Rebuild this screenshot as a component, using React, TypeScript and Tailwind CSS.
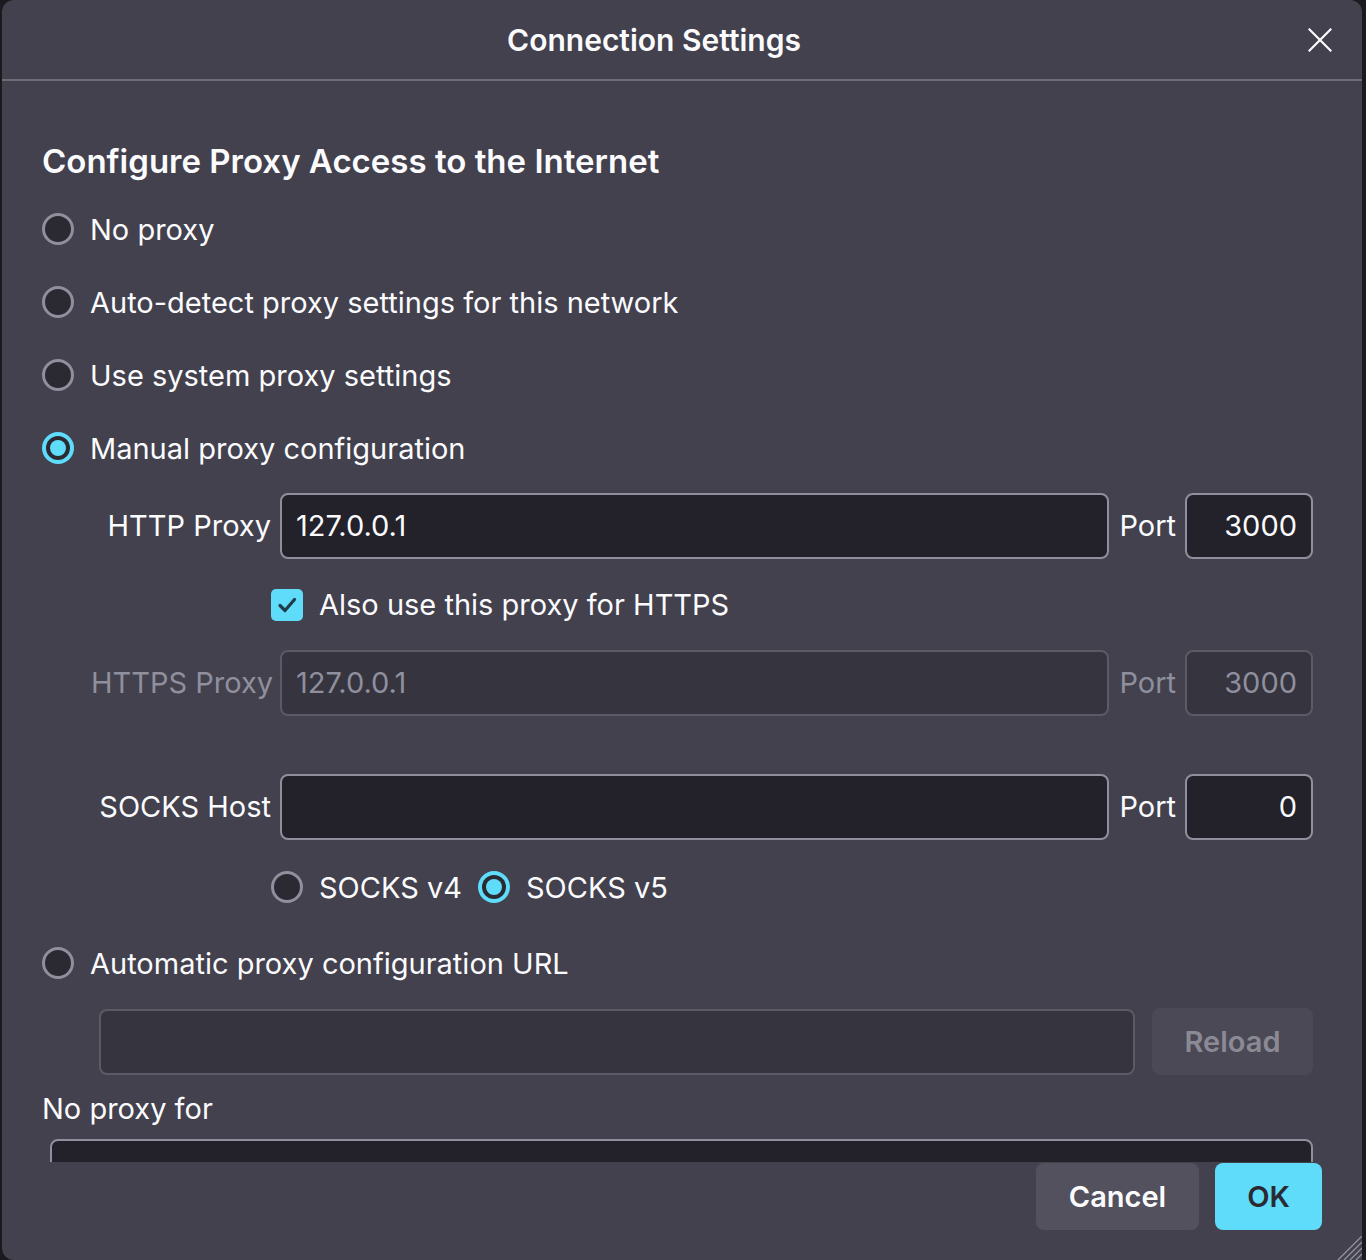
import React from "react";

const font = { fontFamily: "Inter, 'Noto Sans', sans-serif" };

function Radio({ checked }: { checked?: boolean }) {
  if (checked) {
    return (
      <div className="w-[32px] h-[32px] rounded-full bg-[#5fdcfa] flex items-center justify-center shrink-0">
        <div className="w-[24px] h-[24px] rounded-full bg-[#2b2a33] flex items-center justify-center">
          <div className="w-[16px] h-[16px] rounded-full bg-[#5fdcfa]" />
        </div>
      </div>
    );
  }
  return <div className="w-[32px] h-[32px] rounded-full border-[3px] border-[#8f8f9d] bg-[#2b2a33] shrink-0" />;
}

function RadioRow({ label, checked, className }: { label: string; checked?: boolean; className?: string }) {
  return (
    <div className={"flex items-center h-[32px] gap-[16px] " + (className ?? "")}>
      <Radio checked={checked} />
      <span className="text-[29px] text-[#fbfbfe] leading-none whitespace-nowrap">{label}</span>
    </div>
  );
}

function Field({ value, disabled, right, className }: { value?: string; disabled?: boolean; right?: boolean; className?: string }) {
  return (
    <div
      className={
        "h-[66px] rounded-[8px] border-2 flex items-center px-[14px] text-[29px] " +
        (disabled
          ? "bg-[#35343f] border-[#5b5a65] text-[#8f8f9d]"
          : "bg-[#23222b] border-[#8f8f9d] text-[#fbfbfe]") +
        (right ? " justify-end" : "") +
        (className ? " " + className : "")
      }
    >
      {value}
    </div>
  );
}

export default function App() {
  return (
    <div className="w-[1366px] h-[1260px] bg-[#1a1a1f] flex overflow-hidden" style={font}>
      <div className="ml-[2px] w-[1360px] h-full bg-[#42414d] rounded-t-[12px] rounded-bl-[12px] flex flex-col relative">
        {/* header */}
        <div className="h-[81px] border-b-2 border-[#6c6b76] flex items-center shrink-0">
          <div className="flex-1 text-center text-[30px] font-semibold text-[#fbfbfe] pt-[2px]">Connection Settings</div>
          <div className="w-[56px] flex justify-end pr-[30px]">
            <svg width="24" height="24" viewBox="0 0 24 24" fill="none" stroke="#fbfbfe" strokeWidth="2.2" strokeLinecap="square">
              <path d="M1.5 1.5 L22.5 22.5 M22.5 1.5 L1.5 22.5" />
            </svg>
          </div>
        </div>

        {/* content */}
        <div className="h-[1081px] overflow-hidden pl-[40px] pr-[49px] shrink-0">
          <div className="mt-[61px] h-[40px] flex items-center text-[33px] font-semibold text-[#fbfbfe] whitespace-nowrap">
            Configure Proxy Access to the Internet
          </div>
          <div className="mt-[31px] flex flex-col gap-[41px]">
            <RadioRow label="No proxy" />
            <RadioRow label="Auto-detect proxy settings for this network" />
            <RadioRow label="Use system proxy settings" />
            <RadioRow label="Manual proxy configuration" checked />
          </div>

          {/* manual grid */}
          <div className="mt-[29px] ml-[49px] grid grid-cols-[180px_1fr_auto_128px] items-center text-[29px]">
            <div className="text-right text-[#fbfbfe] whitespace-nowrap">HTTP Proxy</div>
            <Field value="127.0.0.1" className="ml-[9px]" />
            <div className="text-[#fbfbfe] pl-[10px] pr-[9px]">Port</div>
            <Field value="3000" right />

            <div className="col-span-4 h-[91px] pl-[180px] flex items-center gap-[16px]">
              <div className="w-[32px] h-[32px] rounded-[5px] bg-[#5fdcfa] flex items-center justify-center shrink-0">
                <svg width="22" height="22" viewBox="0 0 22 22" fill="none" stroke="#1f3d49" strokeWidth="3.2" strokeLinecap="round" strokeLinejoin="round">
                  <path d="M4 11.5 L9 16.5 L18.5 5.5" />
                </svg>
              </div>
              <span className="text-[#fbfbfe] whitespace-nowrap">Also use this proxy for HTTPS</span>
            </div>

            <div className="text-right text-[#8f8f9d] whitespace-nowrap">HTTPS Proxy</div>
            <Field value="127.0.0.1" disabled className="ml-[9px]" />
            <div className="text-[#8f8f9d] pl-[10px] pr-[9px]">Port</div>
            <Field value="3000" disabled right />

            <div className="h-[58px] col-span-4" />

            <div className="text-right text-[#fbfbfe] whitespace-nowrap">SOCKS Host</div>
            <Field className="ml-[9px]" />
            <div className="text-[#fbfbfe] pl-[10px] pr-[9px]">Port</div>
            <Field value="0" right />
          </div>

          <div className="mt-[31px] ml-[229px] flex items-center gap-[16px]">
            <RadioRow label="SOCKS v4" />
            <RadioRow label="SOCKS v5" checked />
          </div>

          <RadioRow className="mt-[44px]" label="Automatic proxy configuration URL" />

          <div className="mt-[29px] ml-[57px] flex items-center gap-[17px]">
            <div className="flex-1">
              <Field disabled />
            </div>
            <div className="w-[161px] h-[67px] rounded-[8px] bg-[#4a4955] flex items-center justify-center text-[29px] font-semibold text-[#8a8994]">
              Reload
            </div>
          </div>

          <div className="mt-[14px] h-[40px] flex items-center text-[29px] text-[#fbfbfe]">No proxy for</div>
          <div className="mt-[10px] ml-[8px] h-[140px] rounded-[8px] border-2 border-[#8f8f9d] bg-[#23222b]" />
        </div>

        {/* footer */}
        <div className="flex justify-end gap-[16px] pr-[40px] pt-[1px]">
          <div className="w-[163px] h-[67px] rounded-[8px] bg-[#52515d] flex items-center justify-center text-[29px] font-semibold text-[#fbfbfe]">
            Cancel
          </div>
          <div className="w-[107px] h-[67px] rounded-[8px] bg-[#5fdcfa] flex items-center justify-center text-[29px] font-semibold text-[#2b2a33]">
            OK
          </div>
        </div>

        {/* resize grip */}
        <svg className="absolute right-0 bottom-0" width="28" height="24" viewBox="0 0 28 24" stroke="#8f8f9d" strokeWidth="1.4">
          <path d="M4 24 L28 0 M10 24 L28 6 M16 24 L28 12 M22 24 L28 18" />
        </svg>
      </div>
    </div>
  );
}
